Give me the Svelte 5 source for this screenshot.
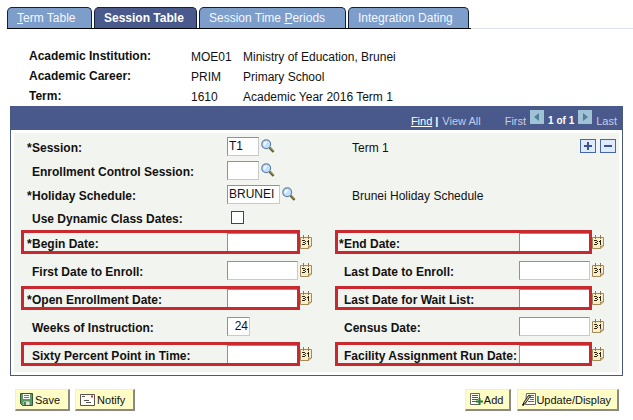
<script>
  const tabs = [
    { key: 'term', before: '', hot: 'T', after: 'erm Table' },
    { key: 'session', before: 'Session Table', hot: '', after: '', active: true },
    { key: 'periods', before: 'Session Time ', hot: 'P', after: 'eriods' },
    { key: 'dating', before: 'Integration Dating', hot: '', after: '' }
  ];
  const info = [
    ['Academic Institution:', 'MOE01', 'Ministry of Education, Brunei'],
    ['Academic Career:', 'PRIM', 'Primary School'],
    ['Term:', '1610', 'Academic Year 2016 Term 1']
  ];
  const rows = [
    [
      { id: 'begin', label: 'Begin Date:', required: true, marked: true },
      { id: 'end', label: 'End Date:', required: true, marked: true }
    ],
    [
      { id: 'first-enroll', label: 'First Date to Enroll:' },
      { id: 'last-enroll', label: 'Last Date to Enroll:' }
    ],
    [
      { id: 'open', label: 'Open Enrollment Date:', required: true, marked: true },
      { id: 'wait', label: 'Last Date for Wait List:', marked: true }
    ],
    [
      { id: 'weeks', label: 'Weeks of Instruction:', weeks: true },
      { id: 'census', label: 'Census Date:' }
    ],
    [
      { id: 'sixty', label: 'Sixty Percent Point in Time:', marked: true },
      { id: 'facility', label: 'Facility Assignment Run Date:', marked: true }
    ]
  ];
</script>

{#snippet lookup(name)}
  <button type="button" class="icon" aria-label={name}>
    <svg width="14" height="14" viewBox="0 0 14 14">
      <path d="M8.6 8.6L12.6 12.8" stroke="#5d5a2c" stroke-width="2.4" />
      <path d="M8.9 8.3L12.6 12" stroke="#b5ab62" stroke-width="1" />
      <circle cx="5.2" cy="5.2" r="4.4" fill="#c4e2f8" stroke="#6583ad" stroke-width="1.2" />
      <path d="M2.6 5.2A2.7 2.7 0 0 1 6.4 2.7L3.4 7Z" fill="#f5fbff" />
    </svg>
  </button>
{/snippet}

{#snippet calendar(name)}
  <button type="button" class="icon" aria-label={name}>
    <svg width="13" height="15" viewBox="0 0 13 15">
      <path d="M.5 2.5H11.5V11L8.5 13.5H.5Z" fill="#fbedc4" stroke="#a28a5c" />
      <path d="M8.5 13.5V11H11.5" fill="#d9c28c" stroke="#a28a5c" />
      <path d="M3.500 0V4M8.500 0V4" stroke="#8f7a50" />
      <path d="M2 5.500H5M3 7.500H5M2 9.500H5M5.500 6V7M5.500 8V9M7 6.500H8M8.500 5V10" stroke="#2b2518" fill="none" />
    </svg>
  </button>
{/snippet}

<nav class="tabs">
  {#each tabs as t}
    <a href="#{t.key}" class="tab {t.key}" class:active={t.active}><span>{t.before}{#if t.hot}<u>{t.hot}</u>{/if}{t.after}</span></a>
  {/each}
</nav>

<dl class="info">
  {#each info as [label, code, text]}
    <div><dt>{label}</dt><dd class="code">{code}</dd><dd>{text}</dd></div>
  {/each}
</dl>

<section class="panel">
  <header>
    <a href="#find" class="find">Find</a>
    <span class="bar">|</span>
    <a href="#all" class="all">View All</a>
    <span>First</span>
    <button type="button" class="step" aria-label="Previous">
      <svg width="14" height="14" viewBox="0 0 14 14"><path d="M9 3V11L4 7Z" fill="#527f99" /></svg>
    </button>
    <strong>1 of 1</strong>
    <button type="button" class="step" aria-label="Next">
      <svg width="14" height="14" viewBox="0 0 14 14"><path d="M5 3V11L10 7Z" fill="#527f99" /></svg>
    </button>
    <span>Last</span>
  </header>

  <form class="body">
    <div class="row">
      <div class="field wide">
        <label for="session"><span class="req">*</span>Session:</label>
        <input id="session" type="text" class="code2" value="T1" />
        {@render lookup('Look up session')}
      </div>
      <span class="desc">Term 1</span>
      <div class="edit">
        <button type="button" aria-label="Add row"><svg width="14" height="12" viewBox="0 0 14 12"><path d="M3 6H11M7 2V10" stroke="#3c5396" stroke-width="2" /></svg></button>
        <button type="button" aria-label="Delete row"><svg width="14" height="12" viewBox="0 0 14 12"><path d="M3 6H11" stroke="#3c5396" stroke-width="2" /></svg></button>
      </div>
    </div>
    <div class="row">
      <div class="field wide">
        <label for="control"><span class="req"></span>Enrollment Control Session:</label>
        <input id="control" type="text" class="code2" />
        {@render lookup('Look up control session')}
      </div>
    </div>
    <div class="row">
      <div class="field wide">
        <label for="holiday"><span class="req">*</span>Holiday Schedule:</label>
        <input id="holiday" type="text" class="code6" value="BRUNEI" />
        {@render lookup('Look up holiday schedule')}
      </div>
      <span class="desc">Brunei Holiday Schedule</span>
    </div>
    <div class="row check">
      <div class="field wide">
        <label for="dynamic"><span class="req"></span>Use Dynamic Class Dates:</label>
        <input id="dynamic" type="checkbox" />
      </div>
    </div>
    {#each rows as pair}
      <div class="row tall">
        {#each pair as f, i}
          <div class="field" class:wide={i === 0} class:marked={f.marked}>
            <label for={f.id}><span class="req">{f.required ? '*' : ''}</span>{f.label}</label>
            {#if f.weeks}
              <input id={f.id} type="text" class="weeks" value="24" />
            {:else}
              <input id={f.id} type="text" class="date" />
              {@render calendar('Choose ' + f.label)}
            {/if}
          </div>
        {/each}
      </div>
    {/each}
  </form>
</section>

<footer>
  <button type="button">
    <svg width="13" height="13" viewBox="0 0 13 13">
      <path d="M.5.5H12.5V12.5H2.5L.5 10.5Z" fill="#5c9a62" stroke="#2f5a3a" />
      <path d="M3 1H10V6H3Z" fill="#fff" /><path d="M4 2.5H9M4 4.5H9" stroke="#777" />
      <path d="M3.5 8.5H9.5V12H3.5Z" fill="#dfe8df" /><path d="M5 9V12" stroke="#2f5a3a" stroke-width="1.5" />
    </svg>Save
  </button>
  <button type="button" class="notify">
    <svg width="15" height="12" viewBox="0 0 15 12">
      <path d="M.5.5H14.5V11.5H.5Z" fill="#fffef0" stroke="#555" />
      <path d="M2 2.5H5M4 6.5H9M6 8.5H11" stroke="#555" /><path d="M11 2.5H13" stroke="#c33" stroke-width="2" />
    </svg>Notify
  </button>
  <button type="button" class="add">
    <svg width="14" height="13" viewBox="0 0 14 13">
      <path d="M.5.5H9.5V11.5H.5Z" fill="#fffef0" stroke="#666" />
      <path d="M2 2.5H8M2 4.5H8M2 6.5H8M2 8.5H6" stroke="#555" />
      <path d="M6 8.5H13M9.5 5V12" stroke="#287a35" stroke-width="2" />
    </svg>Add
  </button>
  <button type="button" class="update">
    <svg width="14" height="13" viewBox="0 0 14 13">
      <path d="M4.5 .5H13.5V11.5H3.5Z" fill="#fffef0" stroke="#666" />
      <path d="M8 2.5H12M8 4.5H12M8 6.5H12M6 8.5H12" stroke="#666" />
      <path d="M1 12L2 9L7 2L8.5 3L3.5 10Z" fill="#d8d4a8" stroke="#222" /><path d="M.5 12.5L2 10.5" stroke="#111" stroke-width="1.5" />
    </svg>Update/Display
  </button>
</footer>

<style>
  :global(body) {
    background: #fff;
    color: #111;
    font: 12px/14px "Liberation Sans", Arial, sans-serif;
  }
  button, input { font-family: inherit; margin: 0; box-sizing: border-box; }
  svg { display: block; flex: none; }

  .tabs { display: flex; padding: 7px 0 0 7px; }
  .tabs::after { content: ""; flex: 1; border-bottom: 1px solid #dfe1ec; }
  .tab { box-sizing: border-box; height: 22px; padding-right: 2px; border-bottom: 1px solid #000; text-decoration: none; }
  .tab span {
    display: block;
    box-sizing: border-box;
    height: 21px;
    padding: 3px 0 0 9px;
    background: #7d9dcb;
    border: 1px solid #14203a;
    border-bottom: 0;
    border-radius: 5px 5px 0 0;
    color: #f4f8ff;
    white-space: nowrap;
  }
  .tab.active span { background: #4a5a8c; color: #fff; font-weight: bold; }
  .term { width: 87px; }
  .session { width: 105px; }
  .periods { width: 149px; }
  .dating { width: 123px; }

  .info { margin: 17px 0 0; padding-left: 29px; height: 60px; }
  .info div { display: flex; height: 20px; align-items: center; line-height: 20px; }
  dt { width: 162px; font-weight: bold; }
  dd { margin: 2px 0 0; }
  .code { width: 52px; }

  .panel { margin: 0 10px; border: 1px solid #4a5a7c; border-top: 0; }
  header {
    display: flex;
    align-items: center;
    justify-content: flex-end;
    height: 24px;
    padding-right: 5px;
    background: #49598c;
    color: #c6cde6;
    font-size: 11px;
  }
  header > span, header > a, header > strong { padding-top: 6px; line-height: 12px; }
  header a { color: inherit; text-decoration: none; }
  header .find { color: #fff; text-decoration: underline; }
  header .bar { margin: 0 4px 0 3px; color: #fff; font-weight: bold; }
  header .all { margin-right: 24px; }
  header strong { color: #fff; margin: 0 4px; font-size: 10px; }
  .step { padding: 0; border: 0; width: 14px; height: 14px; background: #9fc3d4; margin: 0 4px 2px; }
  strong + .step { margin-left: 0; }
  .step:has(+ strong) { margin-right: 0; }

  .body { margin: 3px; padding: 1px 3px 4px 13px; background: #f2f4ef; }
  .row { display: flex; align-items: center; height: 24px; }
  .row.check { height: 22px; }
  .row.tall { height: 28px; }
  .field { position: relative; display: flex; align-items: center; height: 100%; }
  .field.wide { width: 312px; }
  label { display: flex; width: 180px; padding-top: 3px; font-weight: bold; white-space: nowrap; }
  .wide label { width: 200px; }
  .req { width: 5px; }
  input[type="text"] {
    height: 19px;
    padding: 0 1px;
    border: 1px solid #c9cbc8;
    border-top-color: #8f9290;
    border-left-color: #8f9290;
    border-radius: 0;
    background: #fff;
    color: #111;
    font-size: 12px;
  }
  input.code2 { width: 32px; }
  input.code6 { width: 53px; }
  input.date { width: 71px; }
  input.weeks { width: 23px; text-align: right; }
  input[type="checkbox"] {
    appearance: none;
    width: 13px;
    height: 13px;
    margin-left: 4px;
    border: 1px solid #444;
    background: #fff;
  }
  .icon { margin-left: 2px; padding: 0; border: 0; background: none; }
  .desc { margin: 4px 0 0 13px; }
  .edit { display: flex; gap: 4px; margin-left: auto; }
  .edit button { width: 16px; height: 14px; padding: 0; border: 1px solid #4766ae; background: #deebfb; }

  .marked::after {
    content: "";
    position: absolute;
    top: 2px;
    left: -4px;
    width: 257px;
    height: 24px;
    box-sizing: border-box;
    border: 3px solid #c8282e;
    pointer-events: none;
  }
  .marked.wide::after { left: -6px; width: 279px; }

  footer { display: flex; padding: 13px 14px 0 15px; }
  footer button {
    display: flex;
    align-items: center;
    gap: 2px;
    height: 22px;
    padding: 0 8px 0 4px;
    border: 1px solid #f3f0c8;
    border-right: 2px solid #8a8a80;
    border-bottom: 2px solid #8a8a80;
    background: #fffcc6;
    color: #111;
    font-size: 11px;
    white-space: nowrap;
  }
  footer .notify { margin-left: 5px; }
  footer .add { margin-left: auto; }
  footer .update { margin-left: 6px; }
  footer .add, footer .update { gap: 0; padding-right: 6px; }
</style>
